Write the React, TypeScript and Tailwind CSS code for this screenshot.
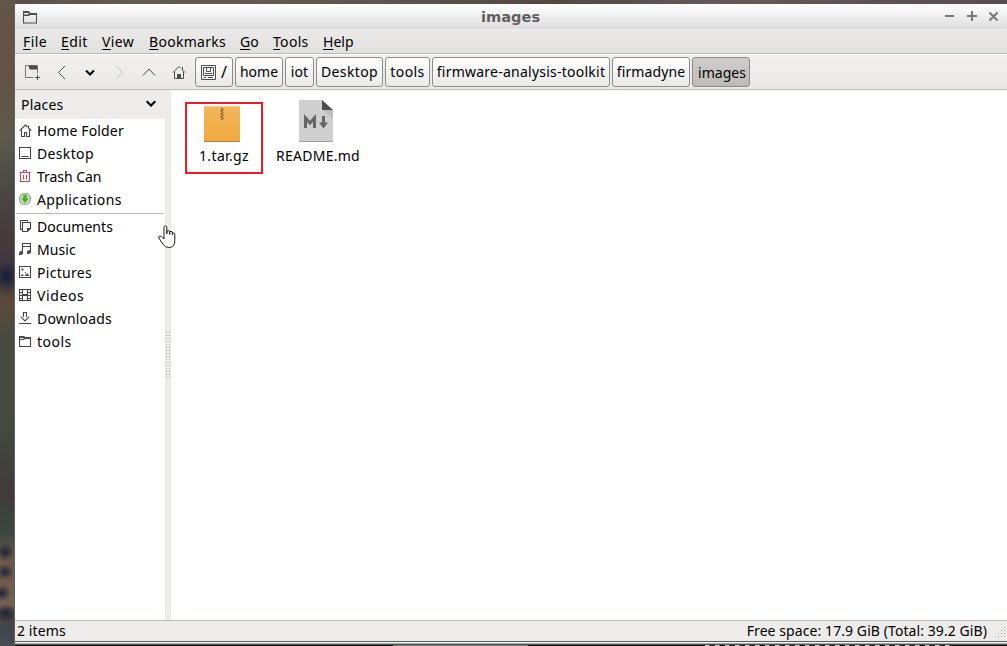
import type { ReactNode } from "react";

type Place = { name: string; icon: string; tracking: string };

const places: Place[] = [
  { name: "Home Folder", icon: "home", tracking: "tracking-[0.16px]" },
  { name: "Desktop", icon: "desktop", tracking: "tracking-[0.35px]" },
  { name: "Trash Can", icon: "trash", tracking: "tracking-[-0.05px]" },
  { name: "Applications", icon: "apps", tracking: "tracking-[0.36px]" },
];
const bookmarks: Place[] = [
  { name: "Documents", icon: "docs", tracking: "tracking-[0.05px]" },
  { name: "Music", icon: "music", tracking: "tracking-[0.1px]" },
  { name: "Pictures", icon: "pictures", tracking: "tracking-[0.3px]" },
  { name: "Videos", icon: "videos", tracking: "tracking-[0.6px]" },
  { name: "Downloads", icon: "downloads", tracking: "tracking-[0.18px]" },
  { name: "tools", icon: "folder", tracking: "tracking-[0.5px]" },
];

const shapes: Record<string, ReactNode> = {
  home: (
    <>
      <path d="M.7 6.700 6.500 1l2 2M9.500 4l2.800 2.700M9.500 1.500v3" />
      <path d="M2.500 5.500v7h3v-4h2v4h3v-7" />
    </>
  ),
  desktop: <path d="M.5 .5h11v11H.5zM2.500 9.500h7" />,
  trash: <path stroke="#da4453" d="M.5 2.500h11M4.500 2.500v-2h3v2M1.500 2.500v9h9v-9M4.500 5v4.500M7.500 5v4.500" />,
  apps: (
    <>
      <circle cx="6" cy="6" r="5.700" fill="#cfd6cc" stroke="#98a59a" />
      <path d="M4.500 2h3v3.500h2L6 10 2.500 5.500h2z" fill="#45b50c" stroke="#5fbf2c" strokeWidth=".6" />
    </>
  ),
  docs: (
    <>
      <path d="M3.500 9.500h-2v-9h7v1M3.500 2.500h8v6l-3 3h-5z" />
      <path d="M8 8h4l-4 4z" fill="#4d4d4d" stroke="none" />
    </>
  ),
  music: (
    <>
      <path d="M3.500 10V.5h8V9M3.500 3.500h8" />
      <path d="M0 9.500 1.500 8H4v2.500L2.500 12H0zM8 8.500 9.500 7H12v2.500L10.500 11H8z" fill="#4d4d4d" stroke="none" />
    </>
  ),
  pictures: (
    <>
      <path d="M.5 .5h11v11H.5z" />
      <path d="M2 10V9l1.500-1L5 10zM5.500 10l2.500-3 2.500 3zM2.500 2.500h2v2h-2zM6 6h1v1H6z" fill="#4d4d4d" stroke="none" />
    </>
  ),
  videos: (
    <>
      <path d="M.5 0v12M11.500 0v12M3 .5h6M3 11.500h6M3.500 0v12M8.500 0v12" />
      <path d="M3 6h6" strokeWidth="2" />
      <path d="M0 .5h3M0 3.500h3M0 6.500h3M0 9.500h3M0 11.500h3M9 .5h3M9 3.500h3M9 6.500h3M9 9.500h3M9 11.500h3" />
    </>
  ),
  downloads: <path d="M0 11.500h12M4.500 5V.5h3V5M1.700 4.700 6 9l4.300-4.300" />,
  folder: (
    <>
      <path d="M.5 11.500V1.500h4l1 1h6v9z" />
      <path d="M0 1h5l1 1h6v2H6L5 5H0V4h4l1-1H1z" fill="#4d4d4d" stroke="none" />
    </>
  ),
};

function PlaceRow({ name, icon, tracking }: Place) {
  return (
    <li className="flex h-[23px] items-center gap-[5px] pl-1">
      <svg width="13" height="13" viewBox="0 0 13 13" fill="none" stroke="#454545" strokeWidth="1.100" className="shrink-0">
        {shapes[icon]}
      </svg>
      <span className={tracking}>{name}</span>
    </li>
  );
}

function MenuItem({ label, className }: { label: string; className: string }) {
  return (
    <span className={className}>
      <span className="underline decoration-1 underline-offset-2">{label[0]}</span>
      {label.slice(1)}
    </span>
  );
}

function Crumb({ label, className, active = false, children }: { label: string; className: string; active?: boolean; children?: ReactNode }) {
  return (
    <button
      className={`flex h-[30px] shrink-0 items-center justify-center rounded-[3px] border border-[#8d8c89] ${
        active ? "bg-linear-to-b from-[#d0cecc] to-[#bdbbb8] pt-[2px] pl-[2px]" : "bg-linear-to-b from-white to-[#e9e9e8]"
      } ${className}`}
    >
      {children}
      {label}
    </button>
  );
}

export default function App() {
  return (
    <div className="relative flex h-[646px] w-[1007px] flex-col overflow-hidden bg-[linear-gradient(90deg,#5d5148,#66604f_14%,#615550_40%,#51453c_55%,#665b5f_70%,#5a4f4e)] pl-[15px] font-['Noto_Sans',sans-serif] text-[14px] leading-[20px] text-black">
      <div className="absolute left-0 top-0 h-[646px] w-[15px] border-r border-[#5f5f60] bg-[radial-gradient(ellipse_9px_9px_at_5px_552px,#202338,transparent),radial-gradient(ellipse_9px_8px_at_5px_572px,#202338,transparent),radial-gradient(ellipse_9px_8px_at_2px_593px,#202338,transparent),radial-gradient(ellipse_12px_9px_at_6px_613px,#202338,transparent),radial-gradient(ellipse_9px_20px_at_14px_493px,#46353b,transparent),radial-gradient(ellipse_14px_16px_at_6px_277px,#181d35,transparent),linear-gradient(180deg,#635548_0px,#655344_75px,#5c594c_140px,#4a4643_195px,#463a3c_240px,#3c3741_270px,#5c493a_303px,#484a42_335px,#454a40_420px,#403d39_490px,#3c4640_532px,#6b5849_560px,#735e50_605px,#4a4343_617px,#41454b_630px,#494b50_646px)]" />

      <header className="flex h-[29px] shrink-0 items-center border-t-4 border-[#5d505040] bg-linear-to-b from-white to-[#dedddd] bg-clip-padding">
        <svg width="14" height="14" viewBox="0 0 14 14" fill="none" stroke="#4d4d4d" strokeWidth="1.100" className="ml-2">
          <path d="M.5 13V1.500h5l1 2h7V13z" />
          <path d="M1 1h5l1 2h7v2H7L6 6H1V4.500h4L6 3H1z" fill="#4d4d4d" stroke="none" />
        </svg>
        <h1 className="ml-[444px] w-[62px] whitespace-nowrap font-['DejaVu_Sans',sans-serif] text-[14.600px] font-bold text-[#5f5f5f]">images</h1>
        <svg width="56" height="12" viewBox="0 0 56 12" fill="none" stroke="#777" strokeWidth="2" className="ml-auto mr-[7px] -mt-px">
          <path d="M1 6h9M23 6h10M28 1v10M45.500 2.500l8 8M53.500 2.500l-8 8" />
        </svg>
      </header>

      <nav className="flex h-[25px] shrink-0 items-center border-b border-[#bcbbb9] bg-linear-to-b from-[#ebeae9] to-[#e2e1df] pl-2 pt-[2px]">
        <MenuItem label="File" className="w-[38px] tracking-[0.400px]" />
        <MenuItem label="Edit" className="w-[41px] tracking-[0.400px]" />
        <MenuItem label="View" className="w-[47px] tracking-[0.400px]" />
        <MenuItem label="Bookmarks" className="w-[91px] tracking-[0.280px]" />
        <MenuItem label="Go" className="w-[33px]" />
        <MenuItem label="Tools" className="w-[50px] tracking-[0.300px]" />
        <MenuItem label="Help" className="w-10" />
      </nav>

      <div className="flex h-9 shrink-0 items-center border-b border-[#bcbbb9] border-t border-t-white bg-linear-to-b from-[#f1f0ef] to-[#eae9e7]">
        <svg width="180" height="20" viewBox="0 0 180 20" fill="none" stroke="#4d4d4d" className="shrink-0">
          <path d="M18.500 15.500h-8v-12h12v8" stroke="#777" />
          <path d="M14 4h7l1 1v2h-7zM20 15.500h5M22.500 13v5" fill="#4d4d4d" />
          <path d="M50 4 43.500 10.500l6.500 6.500" />
          <path d="M71 8.500l4 4 4-4" stroke="#000" strokeWidth="2" />
          <path d="M101 4l6.500 6.500L101 17" stroke="#c8c7c5" />
          <path d="M128 13.500l6-6.500 6 6.500" />
          <path d="M158 10.500l6-6 2 2M168 8.500l2 2M159.500 9.500v7h9v-7M167.500 5v4" />
          <path d="M162 12h4v5h-4z" fill="#4d4d4d" stroke="none" />
        </svg>
        <div className="flex gap-[2px]">
          <Crumb label="/" className="w-[38px] gap-[5px] text-[16px]">
            <svg width="15" height="15" viewBox="0 0 15 15" fill="none" stroke="#4d4d4d">
              <path d="M.5 .5h14v14H.5zM2.500 2.500h10v8h-10zM5.500 2.500h4v4h-4zM4 8.500h7M3 12.500h2M7 12.500h5" />
            </svg>
          </Crumb>
          <Crumb label="home" className="w-12" />
          <Crumb label="iot" className="w-[29px] tracking-[0.200px]" />
          <Crumb label="Desktop" className="w-[67px] tracking-[0.350px]" />
          <Crumb label="tools" className="w-[45px] tracking-[0.400px]" />
          <Crumb label="firmware-analysis-toolkit" className="w-[178px] tracking-[0.240px]" />
          <Crumb label="firmadyne" className="w-[78px] tracking-[0.100px]" />
          <Crumb label="images" className="w-[58px]" active />
        </div>
      </div>

      <main className="flex min-h-0 flex-1 bg-white">
        <aside className="w-[150px] shrink-0 bg-white">
          <div className="flex h-[29px] items-center justify-between bg-[#edecea] pl-[6px] pr-[9px] tracking-[0.200px]">
            Places
            <svg width="10" height="7" viewBox="0 0 10 7" fill="none" stroke="#000" strokeWidth="2" className="-mt-[2px]">
              <path d="M.7 1.200 5 5.500 9.300 1.200" />
            </svg>
          </div>
          <ul>{places.map((p) => <PlaceRow key={p.name} {...p} />)}</ul>
          <hr className="mx-px mb-px mt-[2px] border-[#b8b7b5]" />
          <ul>{bookmarks.map((p) => <PlaceRow key={p.name} {...p} />)}</ul>
        </aside>
        <div className="flex w-[6px] shrink-0 flex-col bg-[#edecea] pt-[241px]">
          <div className="h-[48px] bg-[radial-gradient(circle,#aaa_0.600px,transparent_0.900px)] bg-size-[3px_3px]" />
        </div>
        <section className="flex flex-1 items-start pl-[14px] pt-[12px]">
          <figure className="flex h-[72px] w-[78px] flex-col items-center border-2 border-[#ed1c24] pt-[2px]">
            <svg width="36" height="36" viewBox="0 0 36 36" className="mr-1 shrink-0">
              <defs>
                <linearGradient id="archive" x1="0" x2="0" y1="0" y2="1">
                  <stop stopColor="#f2b75e" />
                  <stop offset="1" stopColor="#f1a83d" />
                </linearGradient>
              </defs>
              <rect width="36" height="36" fill="url(#archive)" />
              <path d="M0 0h36v1H0z" fill="#f8cb88" />
              <path d="M0 35h36v1H0z" fill="#b98335" />
              <path d="M17 2l2 1.500-2 1.500 2 1.500-2 1.500 2 1.500-2 1.500 2 1.500-2 1" fill="none" stroke="#936b31" strokeWidth="1.300" />
            </svg>
            <figcaption className="mt-1 tracking-[0.350px]">1.tar.gz</figcaption>
          </figure>
          <figure className="-mt-[2px] ml-[12px] flex w-[86px] flex-col items-center">
            <svg width="34" height="42" viewBox="0 0 34 42" className="mr-1">
              <path d="M0 0h23l11 10v32H0z" fill="#cfcfcf" />
              <path d="M23 0l11 10H23z" fill="#4d4d4d" />
              <path d="M0 41h34v1H0z" fill="#9f9f9f" />
              <path d="M24 10h10v9z" fill="#bdbdbd" />
              <path d="M6.500 28V18l4.500 5 4.500-5v10" fill="none" stroke="#666" strokeWidth="3" />
              <path d="M24.500 16v10" stroke="#666" strokeWidth="3" />
              <path d="M20 22.500h9l-4.500 6z" fill="#666" />
            </svg>
            <figcaption className="mt-1 tracking-[0.250px]">README.md</figcaption>
          </figure>
        </section>
      </main>

      <footer className="flex h-[21px] shrink-0 items-center border-t border-[#bcbbb9] bg-[#edecea] pl-[2px]">
        <span className="tracking-[0.100px]">2 items</span>
        <span className="ml-auto mr-2 tracking-[0.080px]">Free space: 17.9 GiB (Total: 39.2 GiB)</span>
        <svg width="12" height="12" viewBox="0 0 12 12" fill="#aaa" className="mt-1">
          <path d="M9 0h1v1H9zM6 3h1v1H6zM9 3h1v1H9zM3 6h1v1H3zM6 6h1v1H6zM9 6h1v1H9zM0 9h1v1H0zM3 9h1v1H3zM6 9h1v1H6zM9 9h1v1H9z" />
        </svg>
      </footer>
      <div className="flex h-[5px] shrink-0 flex-col">
        <div className="h-px bg-[#5e5e5e]" />
        <div className="h-px bg-[#f5f5f5]" />
        <div className="h-px bg-[#aaa]" />
        <div className="h-px bg-[#555]" />
        <div className="flex h-px bg-[#111]">
          <div className="ml-[378px] w-[135px] bg-[#66806a]" />
          <div className="ml-[177px] w-[250px] bg-[repeating-linear-gradient(90deg,#ccc_0px,#ccc_4px,#111_5px,#111_10px)]" />
        </div>
      </div>

      <svg width="20" height="26" viewBox="0 0 20 26" className="absolute left-[157px] top-[224px]">
        <path d="M7 15V3.200a1.300 1.300 0 0 1 2.800 0V10V8a1.300 1.300 0 0 1 2.800 0V10.500V8.800a1.300 1.300 0 0 1 2.800 0V11V9.800a1.200 1.200 0 0 1 2.400 .5V17q0 6.500-6 6.500-4 0-6-3.500l-4-6q-.5-3 2.500-1.500z" fill="#fff" stroke="#1c1c2b" />
      </svg>
    </div>
  );
}
